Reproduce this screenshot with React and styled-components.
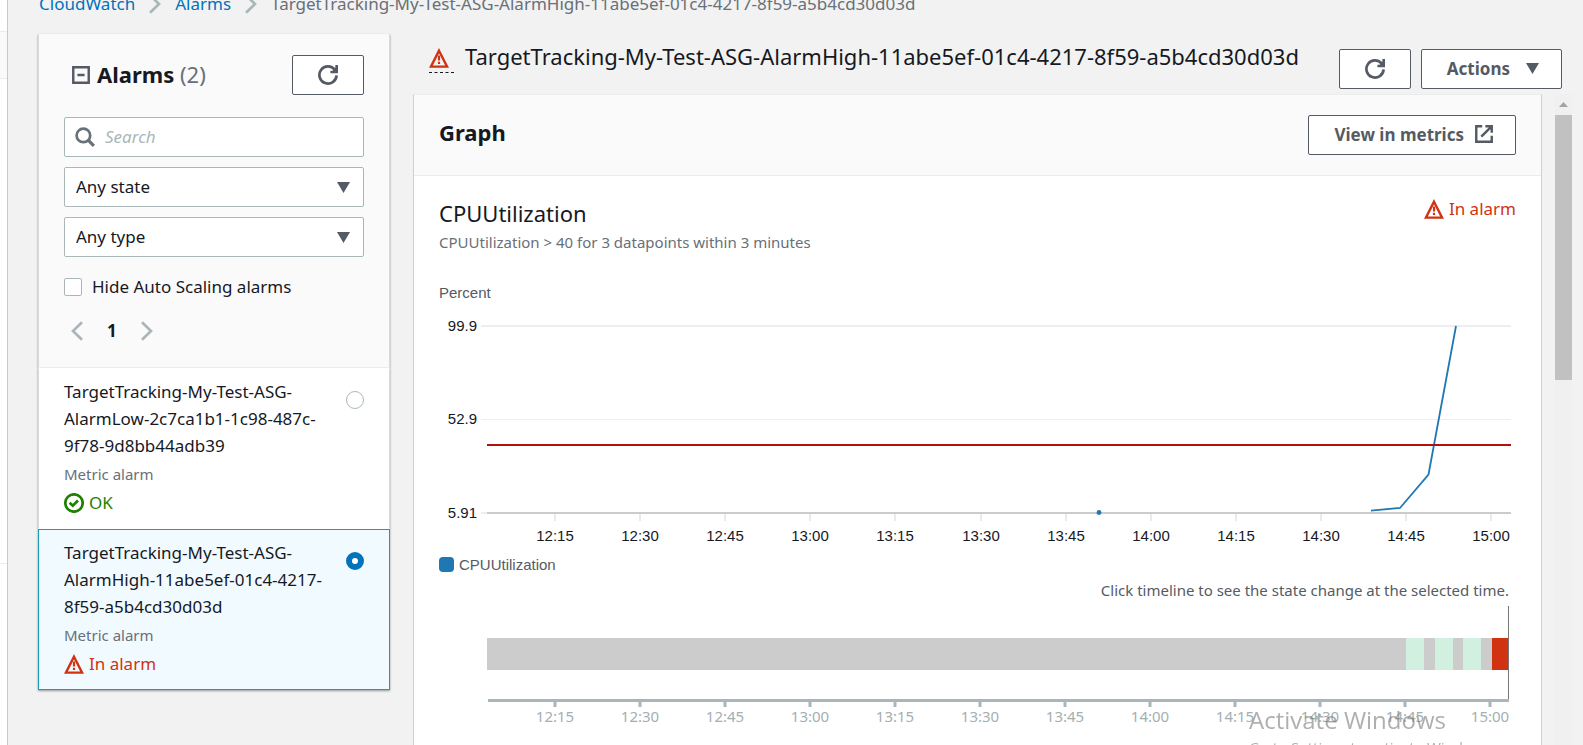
import styled, { createGlobalStyle, css } from 'styled-components';

const GlobalStyle = createGlobalStyle`
  *,
  *::before,
  *::after {
    box-sizing: border-box;
  }

  body {
    margin: 0;
    background: #f2f2f2;
    color: #16191f;
    font-family: 'Noto Sans', 'Open Sans', sans-serif;
    font-size: 17px;
    line-height: 27px;
  }

  button,
  input,
  select {
    font: inherit;
    color: inherit;
  }

  h1,
  h2,
  h3,
  p,
  ul,
  ol {
    margin: 0;
    padding: 0;
    font-weight: 400;
    list-style: none;
  }
`;

const Shell = styled.div`
  display: flex;
  height: 100vh;
  overflow: hidden;
`;

const NavEdge = styled.aside`
  flex: none;
  width: 8px;
  background: #fff;
  border-right: 1px solid #c6cacb;
`;

const NavItem = styled.div`
  height: ${(p) => p.$height}px;
  border-bottom: 1px solid #eaeded;
  background: ${(p) => (p.$shaded ? '#fafafa' : '#fff')};
`;

const Page = styled.div`
  flex: 1;
  min-width: 0;
  display: flex;
  flex-direction: column;
  padding-left: 30px;
`;

const Breadcrumbs = styled.ol`
  flex: none;
  display: flex;
  align-items: center;
  height: 27px;
  margin-top: -10px;
  margin-bottom: 17px;
  padding-left: 1px;
  white-space: nowrap;
`;

const Crumb = styled.li`
  display: flex;
  align-items: center;
  color: #687078;

  a {
    color: #0073bb;
    text-decoration: none;
  }

  svg {
    margin: 0 10px;
    color: #aab7b8;
  }
`;

const Columns = styled.div`
  flex: 1;
  min-height: 0;
  display: flex;
  gap: 23px;
`;

const Sidebar = styled.section`
  flex: none;
  align-self: flex-start;
  width: 352px;
  background: #fff;
  box-shadow: 0 1px 2px rgba(0, 28, 36, 0.4);
`;

const SidebarHeader = styled.div`
  display: flex;
  flex-direction: column;
  gap: 10px;
  height: 334px;
  padding: 21px 25px 0;
  background: #fafafa;
  border: 1px solid #d5dbdb;
  border-top: 0;
  border-bottom-color: #eaeded;
`;

const TitleRow = styled.div`
  display: flex;
  align-items: center;
  gap: 7px;
  padding-left: 8px;
  margin-bottom: 12px;
  color: #545b64;

  h2 {
    flex: 1;
    padding-bottom: 2px;
    color: #16191f;
    font-size: 22px;
    font-weight: 700;
  }

  h2 span {
    color: #687078;
    font-weight: 400;
  }
`;

const Button = styled.button`
  display: inline-flex;
  align-items: center;
  justify-content: center;
  gap: ${(p) => p.$gap || 0}px;
  flex: none;
  height: 40px;
  min-width: 72px;
  padding: ${(p) => (p.$gap ? '0 22px 2px 25px' : 0)};
  background: #fff;
  border: 1px solid #545b64;
  border-radius: 2px;
  color: #545b64;
  font-weight: 700;
  white-space: nowrap;
  cursor: pointer;
`;

const fieldBox = css`
  display: flex;
  align-items: center;
  height: 40px;
  background: #fff;
  border: 1px solid #aab7b8;
  border-radius: 2px;
`;

const SearchBox = styled.label`
  ${fieldBox}
  gap: 10px;
  padding: 0 10px;
  color: #687078;

  input {
    flex: 1;
    min-width: 0;
    padding: 0 0 2px;
    border: 0;
    outline: 0;
    background: transparent;
  }

  input::placeholder {
    color: #aab7b8;
    font-style: italic;
    opacity: 1;
  }
`;

const SelectBox = styled.div`
  display: grid;
  align-items: center;
  color: #545b64;

  select,
  svg {
    grid-area: 1 / 1;
  }

  select {
    ${fieldBox}
    appearance: none;
    width: 100%;
    padding: 0 11px 2px;
    color: #16191f;
  }

  svg {
    justify-self: end;
    margin-right: 14px;
    pointer-events: none;
  }
`;

const CheckRow = styled.label`
  display: flex;
  align-items: center;
  gap: 10px;
  margin-top: 6px;

  input {
    appearance: none;
    width: 18px;
    height: 18px;
    margin: 0;
    background: #fff;
    border: 1px solid #aab7b8;
    border-radius: 2px;
  }
`;

const Pager = styled.nav`
  display: flex;
  align-items: center;
  gap: 20px;
  margin-top: 7px;
  padding-left: 3px;
  font-weight: 700;

  button {
    display: flex;
    padding: 0;
    border: 0;
    background: none;
    color: #aab7b8;
  }
`;

const AlarmItem = styled.label`
  display: flex;
  justify-content: space-between;
  height: 161px;
  padding: 9px 25px 0;
  border: 1px solid;
  border-color: ${(p) => (p.$selected ? '#1d9ab5' : 'transparent #d5dbdb')};
  background: ${(p) => (p.$selected ? '#f1faff' : '#fff')};
`;

const AlarmText = styled.div`
  width: 274px;

  small {
    display: block;
    color: #687078;
    font-size: 15px;
    line-height: 30px;
  }
`;

const Radio = styled.input`
  appearance: none;
  width: 18px;
  height: 18px;
  margin: 13px 0 0;
  border: 1px solid #aab7b8;
  border-radius: 50%;
  background: #fff;

  &:checked {
    border: 6px solid #0073bb;
  }
`;

const Status = styled.span`
  display: flex;
  align-items: center;
  gap: 5px;
  color: ${(p) => (p.$ok ? '#1d8102' : '#d13212')};
`;

const Detail = styled.main`
  flex: 1;
  min-width: 0;
  display: flex;
  flex-direction: column;
  padding-right: 11px;
`;

const DetailHeader = styled.header`
  flex: none;
  display: flex;
  height: 60px;
  padding: 0 10px 0 16px;

  h1 {
    flex: 1;
    min-width: 0;
    margin: 9px 0 0 11px;
    font-size: 22px;
    white-space: nowrap;
  }
`;

const StatusMark = styled.span`
  align-self: flex-start;
  width: 25px;
  height: 25px;
  margin-top: 14px;
  border-bottom: 1px dashed #16191f;
  color: #d13212;
  line-height: 0;
`;

const Actions = styled.div`
  display: flex;
  gap: 10px;
  margin-top: 15px;
`;

const ScrollArea = styled.div`
  flex: 1;
  min-height: 0;
  display: flex;
  gap: 13px;
  overflow: hidden;
`;

const Panel = styled.section`
  flex: 1;
  min-width: 0;
  background: #fff;
  border: 1px solid #ccd1d2;
  border-top-color: #eaeded;
  border-bottom: 0;
`;

const PanelHeader = styled.div`
  display: flex;
  align-items: center;
  justify-content: space-between;
  height: 81px;
  padding: 0 25px;
  background: #fafafa;
  border-bottom: 1px solid #eaeded;

  h2 {
    padding-bottom: 5px;
    font-size: 22px;
    font-weight: 700;
  }
`;

const PanelBody = styled.div`
  padding: 19px 25px;
`;

const MetricHead = styled.div`
  display: flex;
  justify-content: space-between;
  align-items: flex-start;
  margin-bottom: 27px;

  h3 {
    font-size: 22px;
    line-height: 36px;
  }

  p {
    color: #687078;
    font-size: 15px;
    line-height: 22px;
  }
`;

const Chart = styled.svg`
  display: block;
  width: 100%;
  height: auto;
  overflow: visible;
  font-family: 'Liberation Sans', Arial, sans-serif;
  font-size: 15px;
`;

const Hint = styled.p`
  padding: 0 7px 2px 0;
  color: #545b64;
  font-size: 15px;
  text-align: right;
`;

const Timeline = styled(Chart)`
  font-family: 'Noto Sans', 'Open Sans', sans-serif;
`;

const Track = styled.div`
  flex: none;
  display: flex;
  flex-direction: column;
  align-items: center;
  width: 17px;
  background: #f0f0f0;
  color: #a3a3a3;

  svg {
    flex: none;
    margin: 8px 0;
  }
`;

const Thumb = styled.div`
  flex: none;
  width: 17px;
  height: 265px;
  background: #c1c1c1;
`;

const Watermark = styled.div`
  position: fixed;
  right: 0;
  bottom: -13px;
  width: 334px;
  color: rgba(110, 110, 110, 0.55);
  font-family: 'Open Sans', sans-serif;
  font-size: 15px;
  line-height: 22px;
  pointer-events: none;

  strong {
    display: block;
    font-size: 24px;
    font-weight: 400;
    line-height: 32px;
  }
`;

const Icon = ({ size = 20, children }) => (
  <svg width={size} height={size} viewBox="0 0 20 20" fill="none" stroke="currentColor" strokeWidth="2.7" aria-hidden="true">
    {children}
  </svg>
);

const RefreshIcon = () => (
  <Icon>
    <path d="M18.6 10.4A8.6 8.6 0 1 1 16.8 4.7M18.7 0v7H12.4" />
    <path d="M18.5 2v5h-5z" fill="currentColor" stroke="none" />
  </Icon>
);

const WarningIcon = () => (
  <Icon>
    <path d="M10 2.7 18.1 18.6H1.9z" strokeWidth="2.4" />
    <path d="M10 7.6v4.8M10 13.8v2.2" strokeWidth="2.2" />
  </Icon>
);

const OkIcon = () => (
  <Icon>
    <circle cx="10" cy="10" r="8.7" />
    <path d="m5.6 9.7 3.2 3 5.2-5.2" />
  </Icon>
);

const CollapseIcon = () => (
  <Icon size={18}>
    <path d="M1.4 1.4h17.2v17.2H1.4zM6 10h8" />
  </Icon>
);

const SearchIcon = () => (
  <Icon>
    <circle cx="8.4" cy="8.4" r="6.8" />
    <path d="m13.2 13.2 5.7 5.7" strokeWidth="3.2" />
  </Icon>
);

const ExternalIcon = () => (
  <Icon size={18}>
    <path d="M8 1.4H1.4v17.2h17.2V12M11.5 1.4h7.1v7.1M18.4 1.6 7 13" />
  </Icon>
);

const Chevron = ({ left }) => (
  <Icon>
    <path d={left ? 'm15 1.2-9 8.8 9 8.8' : 'm5 1.2 9 8.8-9 8.8'} />
  </Icon>
);

const Caret = ({ width = 13, height = 11, up }) => (
  <svg width={width} height={height} viewBox="0 0 12 10" preserveAspectRatio="none" fill="currentColor" aria-hidden="true">
    <path d={up ? 'M0 10h12L6 0z' : 'M0 0h12L6 10z'} />
  </svg>
);

const TIMES = ['12:15', '12:30', '12:45', '13:00', '13:15', '13:30', '13:45', '14:00', '14:15', '14:30', '14:45', '15:00'];
const tickX = (i, step = 85.1) => Math.round(116 + i * step);

const OK_SPANS = [967, 996, 1024];

const ALARMS = [
  { name: 'TargetTracking-My-Test-ASG-AlarmLow-2c7ca1b1-1c98-487c-9f78-9d8bb44adb39', ok: true },
  { name: 'TargetTracking-My-Test-ASG-AlarmHigh-11abe5ef-01c4-4217-8f59-a5b4cd30d03d', ok: false },
];

const AlarmStatus = ({ ok }) => (
  <Status $ok={ok}>
    {ok ? <OkIcon /> : <WarningIcon />}
    {ok ? 'OK' : 'In alarm'}
  </Status>
);

const AlarmList = () => (
  <Sidebar>
    <SidebarHeader>
      <TitleRow>
        <CollapseIcon />
        <h2>
          Alarms <span>(2)</span>
        </h2>
        <Button aria-label="Refresh alarms">
          <RefreshIcon />
        </Button>
      </TitleRow>
      <SearchBox>
        <SearchIcon />
        <input type="search" placeholder="Search" aria-label="Search" />
      </SearchBox>
      <SelectBox>
        <select aria-label="State">
          <option>Any state</option>
        </select>
        <Caret />
      </SelectBox>
      <SelectBox>
        <select aria-label="Type">
          <option>Any type</option>
        </select>
        <Caret />
      </SelectBox>
      <CheckRow>
        <input type="checkbox" />
        Hide Auto Scaling alarms
      </CheckRow>
      <Pager aria-label="Pages">
        <button aria-label="Previous page">
          <Chevron left />
        </button>
        1
        <button aria-label="Next page">
          <Chevron />
        </button>
      </Pager>
    </SidebarHeader>
    {ALARMS.map((alarm) => (
      <AlarmItem key={alarm.name} $selected={!alarm.ok}>
        <AlarmText>
          {alarm.name}
          <small>Metric alarm</small>
          <AlarmStatus ok={alarm.ok} />
        </AlarmText>
        <Radio type="radio" name="alarm" defaultChecked={!alarm.ok} />
      </AlarmItem>
    ))}
  </Sidebar>
);

const MetricChart = () => (
  <Chart viewBox="0 0 1077 297" role="img" aria-label="CPUUtilization, percent">
    <text x="0" y="18" fill="#545b64">
      Percent
    </text>
    <path d="M42 46h1030M42 233h20" stroke="#eee" strokeWidth="2" />
    <path d="M42 139.5h1030" stroke="#eee" />
    <g fill="#16191f" textAnchor="end">
      <text x="38" y="51">99.9</text>
      <text x="38" y="144">52.9</text>
      <text x="38" y="238">5.91</text>
    </g>
    {TIMES.map((time, i) => (
      <g key={time}>
        <path d={`M${tickX(i)} 234v7`} stroke="#e4e4e4" strokeWidth="1.5" />
        <text x={tickX(i)} y="261" fill="#16191f" textAnchor="middle">
          {time}
        </text>
      </g>
    ))}
    <path d="M48 233h1024" stroke="#ccc" strokeWidth="2" />
    <circle cx="660" cy="232.5" r="2.4" fill="#1f77b4" />
    <path d="M932 230.6 961 228l28.5-33.5L1017 46" fill="none" stroke="#1f77b4" strokeWidth="1.8" />
    <path d="M48 165h1024" stroke="#b0120a" strokeWidth="2" />
    <rect x="0" y="277" width="15" height="15" rx="4" fill="#1f77b4" />
    <text x="20" y="290" fill="#545b64">
      CPUUtilization
    </text>
  </Chart>
);

const StateTimeline = () => (
  <Timeline viewBox="0 0 1077 120" role="img" aria-label="Alarm state timeline">
    <path d="M48 32h1021v32H48z" fill="#ccc" />
    {OK_SPANS.map((x) => (
      <path key={x} d={`M${x} 32h18v32h-18z`} fill="#d2f0e0" />
    ))}
    <path d="M1053 32h17v32h-17z" fill="#d13212" />
    <path d="M1069.5 0v94" stroke="#777" />
    <path d="M49 94.5h1021" stroke="#aab7b8" strokeWidth="3" />
    {TIMES.map((time, i) => (
      <g key={time}>
        <path d={`M${tickX(i, 85)} 95v6`} stroke="#aab7b8" strokeWidth="3" />
        <text x={tickX(i, 85)} y="116" fill="#a3b0b1" textAnchor="middle">
          {time}
        </text>
      </g>
    ))}
  </Timeline>
);

const App = () => (
  <>
    <GlobalStyle />
    <Shell>
      <NavEdge>
        <NavItem $height={32} />
        <NavItem $height={47} $shaded />
        <NavItem $height={485} />
      </NavEdge>
      <Page>
        <Breadcrumbs>
          <Crumb>
            <a href="#cloudwatch">CloudWatch</a>
            <Chevron />
          </Crumb>
          <Crumb>
            <a href="#alarms">Alarms</a>
            <Chevron />
          </Crumb>
          <Crumb>{ALARMS[1].name}</Crumb>
        </Breadcrumbs>
        <Columns>
          <AlarmList />
          <Detail>
            <DetailHeader>
              <StatusMark>
                <WarningIcon />
              </StatusMark>
              <h1>{ALARMS[1].name}</h1>
              <Actions>
                <Button aria-label="Refresh alarm">
                  <RefreshIcon />
                </Button>
                <Button $gap={16}>
                  Actions
                  <Caret />
                </Button>
              </Actions>
            </DetailHeader>
            <ScrollArea>
              <Panel>
                <PanelHeader>
                  <h2>Graph</h2>
                  <Button $gap={11}>
                    View in metrics
                    <ExternalIcon />
                  </Button>
                </PanelHeader>
                <PanelBody>
                  <MetricHead>
                    <div>
                      <h3>CPUUtilization</h3>
                      <p>CPUUtilization &gt; 40 for 3 datapoints within 3 minutes</p>
                    </div>
                    <AlarmStatus />
                  </MetricHead>
                  <MetricChart />
                  <Hint>Click timeline to see the state change at the selected time.</Hint>
                  <StateTimeline />
                </PanelBody>
              </Panel>
              <Track>
                <Caret up width={9} height={5} />
                <Thumb />
              </Track>
            </ScrollArea>
          </Detail>
        </Columns>
      </Page>
    </Shell>
    <Watermark>
      <strong>Activate Windows</strong>
      Go to Settings to activate Windows.
    </Watermark>
  </>
);

export default App;
